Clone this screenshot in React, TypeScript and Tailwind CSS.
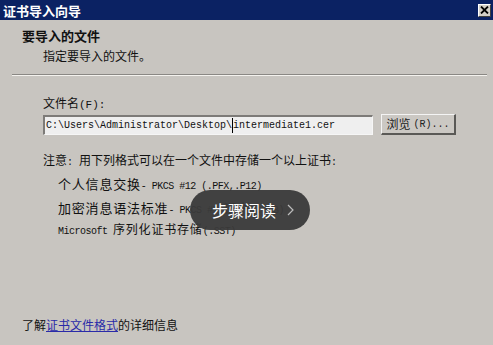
import React from "react";

const cjk = '"Noto Sans CJK SC", "Liberation Sans", sans-serif';
const mono = '"Liberation Mono", "Noto Sans CJK SC", monospace';

function M({ children }: { children: React.ReactNode }) {
  return (
    <span className="text-[10px] tracking-[-0.5px] align-baseline" style={{ fontFamily: mono }}>
      {children}
    </span>
  );
}

export default function App() {
  return (
    <div className="relative w-[493px] h-[345px] overflow-hidden bg-[#c8c5c0] text-[#111]" style={{ fontFamily: cjk }}>
      {/* Title bar */}
      <div className="h-[20px] bg-[#0b2263] flex items-center justify-between pl-[3px] pr-[2px]">
        <span className="text-white font-bold text-[13px] leading-none">证书导入向导</span>
        <div className="w-[13px] h-[13px] bg-[#d4d0c8] border-t border-l border-white border-r border-b border-r-[#404040] border-b-[#404040] flex items-center justify-center">
          <svg width="9" height="8" viewBox="0 0 9 8">
            <path d="M1 0.5 L8 7.5 M8 0.5 L1 7.5" stroke="#000" strokeWidth="1.8" />
          </svg>
        </div>
      </div>

      {/* Header */}
      <div className="pl-[22px] pt-[8px]">
        <div className="font-bold text-[13px] leading-[16px]">要导入的文件</div>
        <div className="pl-[21px] mt-[4px] text-[12px] leading-[16px]">指定要导入的文件。</div>
      </div>
      <div className="ml-[12px] mr-[6px] mt-[10px] h-[2px] border-t border-[#8a8884] border-b border-b-[#f4f2ee]" />

      {/* Body */}
      <div className="pl-[43px] pt-[19px]">
        <div className="text-[12px] leading-[16px]">
          文件名<span style={{ fontFamily: mono }} className="text-[11px]">(F):</span>
        </div>
        <div className="flex items-center gap-[8px] mt-[1px]">
          <div className="w-[330px] h-[20px] bg-[#efefef] border-t-2 border-l-2 border-[#7d7b78] border-r border-b border-r-[#f6f6f6] border-b-[#f6f6f6] flex items-center pl-[1px] text-[10px]" style={{ fontFamily: mono }}>
            C:\Users\Administrator\Desktop\<span className="border-l border-black">intermediate1.cer</span>
          </div>
          <div className="w-[75px] h-[21px] bg-[#cbc8c3] border-t border-l border-[#f4f4f4] border-r-2 border-b-2 border-r-[#5a5956] border-b-[#5a5956] flex items-center justify-center text-[12px] text-[#222]">
            浏览<span className="text-[10px] ml-[3px]" style={{ fontFamily: mono }}>(R)...</span>
          </div>
        </div>

        <div className="mt-[17px] h-[16px] text-[12px] leading-[16px]">
          注意<span style={{ fontFamily: mono }} className="text-[10px]">: </span>用下列格式可以在一个文件中存储一个以上证书<span style={{ fontFamily: mono }} className="text-[10px]">:</span>
        </div>
        <div className="pl-[15px] mt-[6px] text-[13px] tracking-[0.8px]">
          <div className="h-[24px] leading-[20px]">
            个人信息交换<M>- PKCS #12 (.PFX,.P12)</M>
          </div>
          <div className="h-[21px] leading-[20px]">
            加密消息语法标准<M>- PKCS #7 </M>证书<M>(.P7B)</M>
          </div>
          <div className="h-[20px] leading-[20px] text-[12px]">
            <M>Microsoft&nbsp;</M>序列化证书存储<M>(.SST)</M>
          </div>
        </div>
      </div>

      {/* Footer link */}
      <div className="absolute left-[22px] top-[317px] text-[12px] leading-[16px]">
        了解<span className="text-[#2a2aa8] underline">证书文件格式</span>的详细信息
      </div>

      {/* Overlay pill */}
      <div className="absolute left-[190px] top-[190px] w-[120px] h-[40px] rounded-full bg-[#3a3a3a]/95 flex items-center pl-[22px] text-white">
        <span className="text-[16px] leading-none">步骤阅读</span>
        <svg className="ml-[11px]" width="7" height="12" viewBox="0 0 7 12">
          <path d="M1 1 L6 6 L1 11" stroke="#bdbdbd" strokeWidth="1.2" fill="none" />
        </svg>
      </div>
    </div>
  );
}
